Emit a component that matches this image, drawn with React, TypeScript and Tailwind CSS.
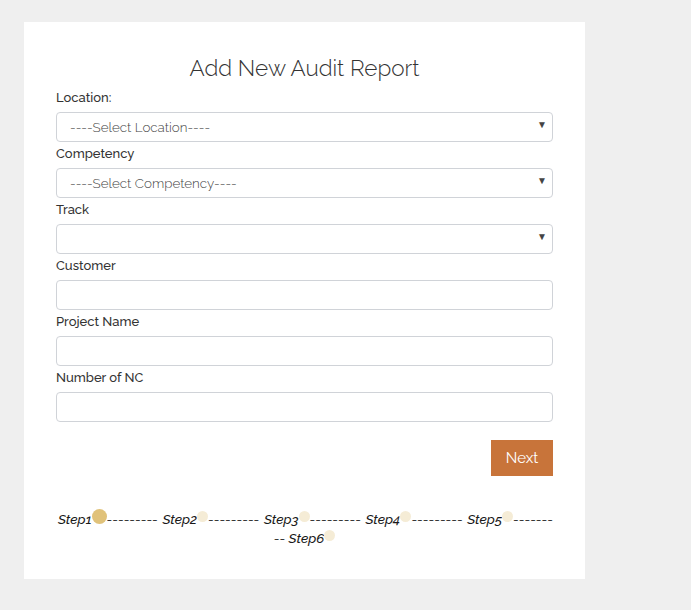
import React from "react";

const font = { fontFamily: "Raleway, Lato, 'Open Sans', sans-serif" };

function Field({ label, children }: { label: string; children: React.ReactNode }) {
  return (
    <div className="flex flex-col">
      <label className="text-[13px] leading-[15px] font-medium text-[#333] mb-[7px]">{label}</label>
      {children}
    </div>
  );
}

function Select({ placeholder }: { placeholder?: string }) {
  return (
    <div className="relative">
      <select
        defaultValue=""
        className="appearance-none w-full h-[30px] rounded-[4px] border border-[#d0d3d8] bg-white pl-[13px] pr-8 text-[13.4px] font-light text-[#444] outline-none"
      >
        <option value="">{placeholder ?? ""}</option>
      </select>
      <span className="pointer-events-none absolute right-[6px] top-[8px] text-[10px] leading-none text-[#444]">▼</span>
    </div>
  );
}

function Input() {
  return <input className="w-full h-[30px] rounded-[4px] border border-[#d0d3d8] bg-white px-3 text-[13px] outline-none" />;
}

function Dot({ big }: { big?: boolean }) {
  return big ? (
    <span className="inline-block w-[15px] h-[15px] rounded-full bg-[#e0c27a] align-[0px]" />
  ) : (
    <span className="inline-block w-[11px] h-[11px] rounded-full bg-[#f5ecd6] align-[2px]" />
  );
}

function Step({ n, big, dashes }: { n: number; big?: boolean; dashes?: string }) {
  return (
    <span className="whitespace-nowrap">
      <i className="font-medium">Step{n}</i>
      <Dot big={big} />
      {dashes}
    </span>
  );
}

export default function App(): React.ReactElement {
  return (
    <div className="min-h-[610px] bg-[#efefef] pt-[22px] pl-[24px]" style={font}>
      <div className="w-[561px] h-[557px] bg-white px-[32px] pt-[32px]">
        <h1 className="text-center text-[22.5px] leading-[28px] font-light text-[#333] mb-[8px]">Add New Audit Report</h1>
        <div className="flex flex-col gap-[4px]">
          <Field label="Location:">
            <Select placeholder="----Select Location----" />
          </Field>
          <Field label="Competency">
            <Select placeholder="----Select Competency----" />
          </Field>
          <Field label="Track">
            <Select />
          </Field>
          <Field label="Customer">
            <Input />
          </Field>
          <Field label="Project Name">
            <Input />
          </Field>
          <Field label="Number of NC">
            <Input />
          </Field>
        </div>
        <div className="flex justify-end mt-[18px]">
          <button className="w-[62px] h-[36px] bg-[#c8743a] text-white text-[15px]">Next</button>
        </div>
        <div className="mt-[33px] text-[13.5px] leading-[19px] text-[#1a1a1a]">
          <div className="flex justify-between items-center pl-[2px]">
            <Step n={1} big dashes="---------" />
            <Step n={2} dashes="---------" />
            <Step n={3} dashes="---------" />
            <Step n={4} dashes="---------" />
            <Step n={5} dashes="-------" />
          </div>
          <div className="text-center">
            -- <Step n={6} />
          </div>
        </div>
      </div>
    </div>
  );
}
